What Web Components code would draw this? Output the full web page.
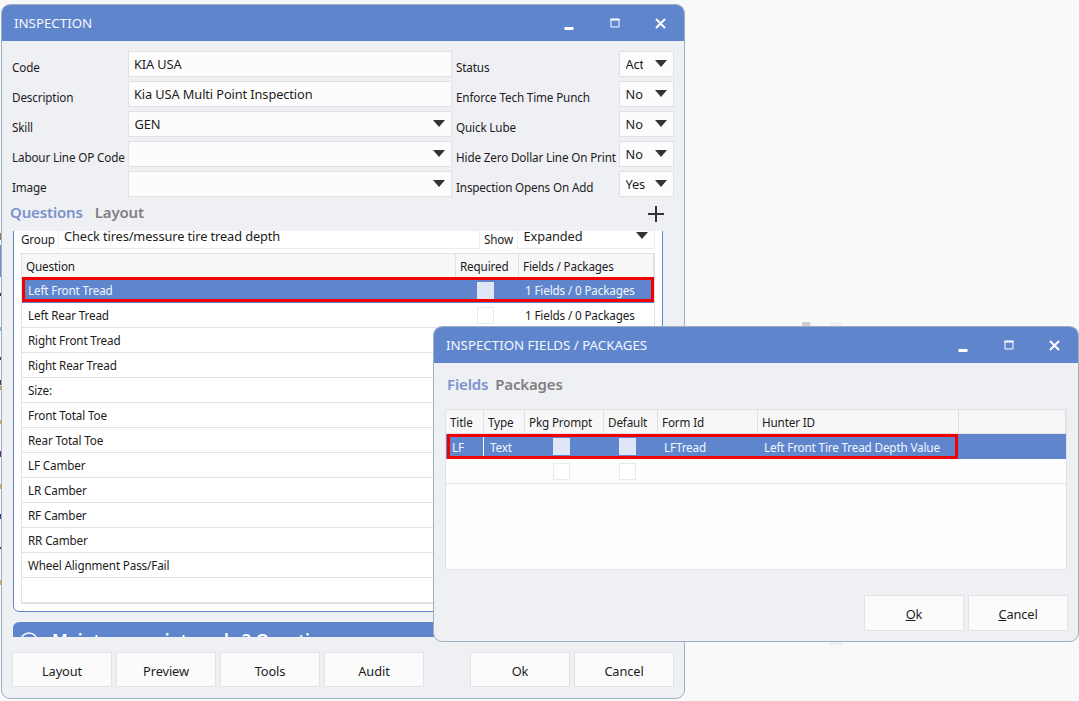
<!DOCTYPE html>
<html>
<head>
<meta charset="utf-8">
<title>Inspection</title>
<style>
  html, body { margin: 0; height: 100%; background: #f8f9fa; overflow: hidden; }
  body { position: relative; font: 11.7px "Noto Sans", "Open Sans", sans-serif; letter-spacing: -0.15px; color: #1c1c1c; }
  .main { --x: 1px; --y: 4px; --w: 684px; --h: 695px; }
  .fields { --x: 433px; --y: 326px; --w: 646px; --h: 316px; }
</style>
</head>
<body>

<template id="window-tpl">
  <style>
    :host {
      position: absolute;
      left: var(--x); top: var(--y);
      width: var(--w); height: var(--h);
      box-sizing: border-box;
      display: flex;
      flex-direction: column;
      background: #eff0f4;
      border: 1px solid #9eafc0;
      border-radius: 9px;
      overflow: hidden;
    }
    header {
      flex: none;
      height: 36px;
      display: flex;
      align-items: center;
      padding-left: 12px;
      background: #5f86cd;
      color: #f4f7fc;
      font-size: 13.3px;
      letter-spacing: 0;
      white-space: nowrap;
    }
    .title { flex: 1; }
    svg { display: block; flex: none; }
    .controls { display: flex; align-items: center; }
    .controls div { width: 45.5px; height: 36px; display: flex; align-items: center; justify-content: center; }
    main { flex: 1; min-height: 0; display: flex; flex-direction: column; }
  </style>
  <header>
    <span class="title"></span>
    <span class="controls">
      <div><svg width="10" height="10" viewBox="0 0 10 10" style="transform:translateY(3px)"><rect x="0.5" y="6" width="9" height="3" fill="#fff"/></svg></div>
      <div><svg width="10" height="10" viewBox="0 0 10 10"><path d="M1 1v8h8V1" fill="none" stroke="#fff" stroke-width="1"/><rect x="0.5" y="0.5" width="9" height="2" fill="#fff"/></svg></div>
      <div style="margin-right:1px"><svg width="11" height="11" viewBox="0 0 11 11"><path d="M1 1l9 9M10 1l-9 9" fill="none" stroke="#fff" stroke-width="2"/></svg></div>
    </span>
  </header>
  <main><slot></slot></main>
</template>

<template id="field-tpl">
  <style>
    :host {
      display: block;
      height: 26px;
      box-sizing: border-box;
      background: #fcfcfc;
      border: 1px solid #e1e2e6;
      font-size: 12.8px;
      letter-spacing: -0.1px;
      color: #1c1c1c;
      position: relative;
    }
    .box { height: 100%; display: flex; align-items: center; padding-left: 5px; box-sizing: border-box; white-space: nowrap; }
    :host([select]) .box { padding-left: 5.5px; }
    .value { overflow: hidden; }
    svg { position: absolute; right: 6px; top: 8px; }
  </style>
  <div class="box"><span class="value"><slot></slot></span></div>
  <svg width="12" height="7" viewBox="0 0 12 7"><path d="M0 0h12L6 7z" fill="#333"/></svg>
</template>

<template id="button-tpl">
  <style>
    :host {
      display: flex;
      align-items: center;
      justify-content: center;
      width: 100px;
      height: 35px;
      padding-top: var(--btn-nudge, 1px);
      box-sizing: border-box;
      background: #fbfbfc;
      border: 1px solid #e1e2e6;
      font-size: 12.8px;
      letter-spacing: -0.1px;
      color: #1c1c1c;
    }
    ::slotted(u) { text-underline-offset: 2px; }
  </style>
  <slot></slot>
</template>

<template id="tabs-tpl">
  <style>
    :host {
      display: flex;
      align-items: center;
      font-size: 15px;
      letter-spacing: -0.15px;
      font-weight: 600;
      color: #7f7f82;
    }
    ::slotted(b) { font-weight: 600; color: #7b92cb; }
    ::slotted(svg) { margin-left: auto; }
  </style>
  <slot></slot>
</template>

<template id="grid-tpl">
  <style>
    :host {
      display: block;
      box-sizing: border-box;
      background: #fdfdfd;
      border: 1px solid #e1e2e6;
    }
  </style>
  <slot></slot>
</template>

<template id="row-tpl">
  <style>
    :host {
      position: relative;
      display: grid;
      grid-template-columns: var(--cols);
      height: 25px;
      box-sizing: border-box;
      align-items: center;
      border-bottom: 1px solid #e2e3e6;
      background: #fff;
      --cell-pad: var(--row-pad, 6px);
    }
    :host([head]) { height: 24px; background: #f7f7f8; --cell-pad: var(--head-pad, 4px); --cell-line: #e1e2e6; }
    :host([selected]) { background: #5f86cd; color: #f2f6fc; border-bottom-color: #5f86cd; --tick: #dfe6f5; --tick-line: #dfe6f5; }
    .flag { display: none; position: absolute; border: 3px solid #f40000; box-sizing: border-box; pointer-events: none;
      top: var(--flag-top); left: var(--flag-left); right: var(--flag-right); bottom: var(--flag-bottom); }
    :host([flag]) .flag { display: block; }
  </style>
  <slot></slot>
  <div class="flag"></div>
</template>

<template id="cell-tpl">
  <style>
    :host {
      display: flex;
      align-items: center;
      height: 100%;
      min-width: 0;
      box-sizing: border-box;
      padding: var(--cell-nudge, 0) var(--cell-pad) 0;
      white-space: nowrap;
      border-right: 1px solid var(--cell-line, transparent);
    }
    :host([tick]) { padding: 0 var(--tick-pad, 4px) 0 0; justify-content: center; }
  </style>
  <slot></slot>
</template>

<template id="tick-tpl">
  <style>
    :host {
      display: block;
      width: 17px;
      height: 17px;
      box-sizing: border-box;
      background: var(--tick, #fff);
      border: 1px solid var(--tick-line, #e9eaec);
    }
  </style>
</template>

<script>
  // Every element here just clones a template into an open shadow root
  class TemplateElement extends HTMLElement {
    constructor() {
      super();
      this.attachShadow({ mode: "open" });
      const t = document.getElementById(this.constructor.templateId);
      this.shadowRoot.appendChild(t.content.cloneNode(true));
    }
  }

  class InsWindow extends TemplateElement {
    static templateId = "window-tpl";
    connectedCallback() {
      this.shadowRoot.querySelector(".title").textContent = this.getAttribute("heading");
    }
  }

  class InsField extends TemplateElement {
    static templateId = "field-tpl";
    connectedCallback() {
      // Plain inputs have no arrow
      if (!this.hasAttribute("select")) this.shadowRoot.querySelector("svg").remove();
      const width = this.getAttribute("clip");
      if (width) this.shadowRoot.querySelector(".value").style.width = width + "px";
    }
  }

  class InsButton extends TemplateElement { static templateId = "button-tpl"; }
  class InsTabs extends TemplateElement { static templateId = "tabs-tpl"; }
  class InsGrid extends TemplateElement { static templateId = "grid-tpl"; }
  class InsRow extends TemplateElement { static templateId = "row-tpl"; }
  class InsCell extends TemplateElement { static templateId = "cell-tpl"; }
  class InsTick extends TemplateElement { static templateId = "tick-tpl"; }

  class InspectionForm extends HTMLElement {
    constructor() {
      super();
      this.attachShadow({ mode: "open" });
      this.shadowRoot.innerHTML = `
      <style>
        :host {
          display: grid;
          grid-template-columns: 116px 324px 167px 55px;
          grid-auto-rows: 26px;
          row-gap: 4px;
          padding: 10px 10px 0 10px;
        }
        ::slotted(label) { padding-top: 8px; white-space: nowrap; color: #1c1c1c; }
        ::slotted(label.right) { padding-left: 4px; }
      </style>
      <slot></slot>`;
    }
  }

  class QuestionPanel extends HTMLElement {
    constructor() {
      super();
      this.attachShadow({ mode: "open" });
      this.shadowRoot.innerHTML = `
      <style>
        :host {
          display: block;
          flex: none;
          height: 406px;
          margin: 0 21px 0 11px;
          overflow: hidden;
        }
        .group {
          margin-top: -9px;
          padding: 0 7px 8px 7px;
          height: 390px;
          box-sizing: border-box;
          border: 1px solid #5f86cd;
          border-radius: 0 0 6px 6px;
          background: #fff;
        }
        .bar {
          margin-top: 10px;
          height: 40px;
          border-radius: 6px 6px 0 0;
          background: #5f86cd;
          color: #fff;
          display: flex;
          align-items: flex-start;
          gap: 14px;
          padding: 7px 0 0 7px;
          font-size: 17px;
          letter-spacing: 0;
          font-weight: 600;
          white-space: nowrap;
        }
        .bar svg { flex: none; margin-top: 3px; }
      </style>
      <div class="group"><slot></slot></div>
      <div class="bar">
        <svg width="18" height="18" viewBox="0 0 18 18"><circle cx="9" cy="9" r="8" fill="none" stroke="#fff" stroke-width="1.5"/></svg>
        <span>Maintenance intervals 3 Questions</span>
      </div>`;
    }
  }

  class GroupLine extends HTMLElement {
    constructor() {
      super();
      this.attachShadow({ mode: "open" });
      this.shadowRoot.innerHTML = `
      <style>
        :host {
          display: grid;
          grid-template-columns: 37px 422px 37px 138px;
          height: 26px;
          margin-bottom: 4px;
        }
        ::slotted(label) { padding-top: 8px; white-space: nowrap; }
      </style>
      <slot></slot>`;
    }
  }

  class ButtonBar extends HTMLElement {
    constructor() {
      super();
      this.attachShadow({ mode: "open" });
      this.shadowRoot.innerHTML = `
      <style>
        :host { display: flex; gap: 4px; }
        .spacer { flex: 1; }
      </style>
      <slot name="left"></slot><div class="spacer"></div><slot></slot>`;
    }
  }

  // Bits of the app behind the dialogs that show past their edges
  class DeskMarks extends HTMLElement {
    constructor() {
      super();
      this.attachShadow({ mode: "open" });
      const marks = [
        [0, 233, 1, 7, "#9a7a5a"], [0, 245, 1, 32, "#6f8fd0"], [0, 293, 1, 3, "#333"],
        [0, 327, 1, 4, "#7fb5ea"], [0, 357, 1, 3, "#444"], [0, 380, 1, 5, "#444"],
        [0, 386, 1, 4, "#d89a4a"], [0, 420, 1, 4, "#e0a050"], [0, 451, 1, 6, "#6a2a7a"],
        [0, 484, 1, 5, "#e0a050"], [0, 514, 1, 5, "#3a3a8a"], [0, 547, 1, 2, "#444"],
        [0, 580, 1, 5, "#e0a050"], [802, 322, 8, 4, "#cdcdcd"], [811, 322, 1, 4, "#e8e8e8"],
        [830, 322, 12, 4, "#f2f2f2"], [830, 642, 12, 3, "#f0f0f0"]
      ];
      const spans = marks.map(([x, y, w, h, c]) =>
        `<i style="left:${x}px;top:${y}px;width:${w}px;height:${h}px;background:${c}"></i>`).join("");
      this.shadowRoot.innerHTML = `<style>:host { display: contents; } i { position: absolute; }</style>${spans}`;
    }
  }

  customElements.define("ins-window", InsWindow);
  customElements.define("ins-field", InsField);
  customElements.define("ins-button", InsButton);
  customElements.define("ins-tabs", InsTabs);
  customElements.define("ins-grid", InsGrid);
  customElements.define("ins-row", InsRow);
  customElements.define("ins-cell", InsCell);
  customElements.define("ins-tick", InsTick);
  customElements.define("inspection-form", InspectionForm);
  customElements.define("question-panel", QuestionPanel);
  customElements.define("group-line", GroupLine);
  customElements.define("button-bar", ButtonBar);
  customElements.define("desk-marks", DeskMarks);
</script>

<desk-marks></desk-marks>

<ins-window class="main" heading="INSPECTION">
  <inspection-form>
    <label>Code</label><ins-field>KIA USA</ins-field>
    <label class="right">Status</label><ins-field select clip="17">Active</ins-field>
    <label>Description</label><ins-field>Kia USA Multi Point Inspection</ins-field>
    <label class="right">Enforce Tech Time Punch</label><ins-field select>No</ins-field>
    <label>Skill</label><ins-field select>GEN</ins-field>
    <label class="right">Quick Lube</label><ins-field select>No</ins-field>
    <label>Labour Line OP Code</label><ins-field select></ins-field>
    <label class="right">Hide Zero Dollar Line On Print</label><ins-field select>No</ins-field>
    <label>Image</label><ins-field select></ins-field>
    <label class="right">Inspection Opens On Add</label><ins-field select>Yes</ins-field>
  </inspection-form>

  <ins-tabs style="height:34px;padding:0 20px 4px 8px;box-sizing:border-box;gap:12px">
    <b>Questions</b><span>Layout</span>
    <svg width="16" height="16" viewBox="0 0 16 16" style="transform:translateY(2px)"><path d="M8 0v16M0 8h16" stroke="#333" stroke-width="2" fill="none"/></svg>
  </ins-tabs>

  <question-panel>
    <group-line>
      <label>Group</label><ins-field style="border-color:#fff #eceded #eceded #eceded;background:#fff">Check tires/messure tire tread depth</ins-field>
      <label style="padding-left:4px">Show</label><ins-field select style="border-color:#fff #eceded #eceded #eceded;background:#fff">Expanded</ins-field>
    </group-line>
    <ins-grid style="--cols:434px 63px 1fr">
      <ins-row head><ins-cell>Question</ins-cell><ins-cell>Required</ins-cell><ins-cell>Fields / Packages</ins-cell></ins-row>
      <ins-row selected flag style="--flag-top:-1px;--flag-left:0;--flag-right:0;--flag-bottom:0">
        <ins-cell>Left Front Tread</ins-cell><ins-cell tick><ins-tick></ins-tick></ins-cell><ins-cell>1 Fields / 0 Packages</ins-cell>
      </ins-row>
      <ins-row><ins-cell>Left Rear Tread</ins-cell><ins-cell tick><ins-tick></ins-tick></ins-cell><ins-cell>1 Fields / 0 Packages</ins-cell></ins-row>
      <ins-row><ins-cell>Right Front Tread</ins-cell></ins-row>
      <ins-row><ins-cell>Right Rear Tread</ins-cell></ins-row>
      <ins-row><ins-cell>Size:</ins-cell></ins-row>
      <ins-row><ins-cell>Front Total Toe</ins-cell></ins-row>
      <ins-row><ins-cell>Rear Total Toe</ins-cell></ins-row>
      <ins-row><ins-cell>LF Camber</ins-cell></ins-row>
      <ins-row><ins-cell>LR Camber</ins-cell></ins-row>
      <ins-row><ins-cell>RF Camber</ins-cell></ins-row>
      <ins-row><ins-cell>RR Camber</ins-cell></ins-row>
      <ins-row><ins-cell>Wheel Alignment Pass/Fail</ins-cell></ins-row>
      <ins-row></ins-row>
    </ins-grid>
  </question-panel>

  <button-bar style="margin:15px 10px 0 10px;--btn-nudge:3px">
    <ins-button slot="left">Layout</ins-button>
    <ins-button slot="left">Preview</ins-button>
    <ins-button slot="left">Tools</ins-button>
    <ins-button slot="left">Audit</ins-button>
    <ins-button>Ok</ins-button>
    <ins-button>Cancel</ins-button>
  </button-bar>
</ins-window>

<ins-window class="fields" heading="INSPECTION FIELDS / PACKAGES">
  <ins-tabs style="height:46px;padding:0 0 4px 13px;box-sizing:border-box;gap:7px">
    <b>Fields</b><span>Packages</span>
  </ins-tabs>
  <ins-grid style="--cols:38px 41px 79px 54px 100px 201px 1fr;--row-pad:6px;--head-pad:4px;--cell-nudge:1px;--tick-pad:6px;margin:0 11px;height:161px">
    <ins-row head>
      <ins-cell>Title</ins-cell><ins-cell>Type</ins-cell><ins-cell>Pkg Prompt</ins-cell><ins-cell>Default</ins-cell>
      <ins-cell>Form Id</ins-cell><ins-cell>Hunter ID</ins-cell><ins-cell></ins-cell>
    </ins-row>
    <ins-row selected flag style="--flag-top:0;--flag-left:1px;--flag-right:108px;--flag-bottom:-1px">
      <ins-cell style="border-right:1px solid #fff">LF</ins-cell><ins-cell>Text</ins-cell>
      <ins-cell tick><ins-tick></ins-tick></ins-cell><ins-cell tick><ins-tick></ins-tick></ins-cell>
      <ins-cell>LFTread</ins-cell><ins-cell>Left Front Tire Tread Depth Value</ins-cell><ins-cell></ins-cell>
    </ins-row>
    <ins-row style="background:#fdfdfd">
      <ins-cell></ins-cell><ins-cell></ins-cell>
      <ins-cell tick><ins-tick></ins-tick></ins-cell><ins-cell tick><ins-tick></ins-tick></ins-cell>
      <ins-cell></ins-cell><ins-cell></ins-cell><ins-cell></ins-cell>
    </ins-row>
  </ins-grid>
  <button-bar style="margin:25px 10px 0 10px">
    <ins-button slot="left" style="visibility:hidden;width:0"></ins-button>
    <ins-button style="height:36px"><span><u>O</u>k</span></ins-button>
    <ins-button style="height:36px"><span><u>C</u>ancel</span></ins-button>
  </button-bar>
</ins-window>

</body>
</html>
